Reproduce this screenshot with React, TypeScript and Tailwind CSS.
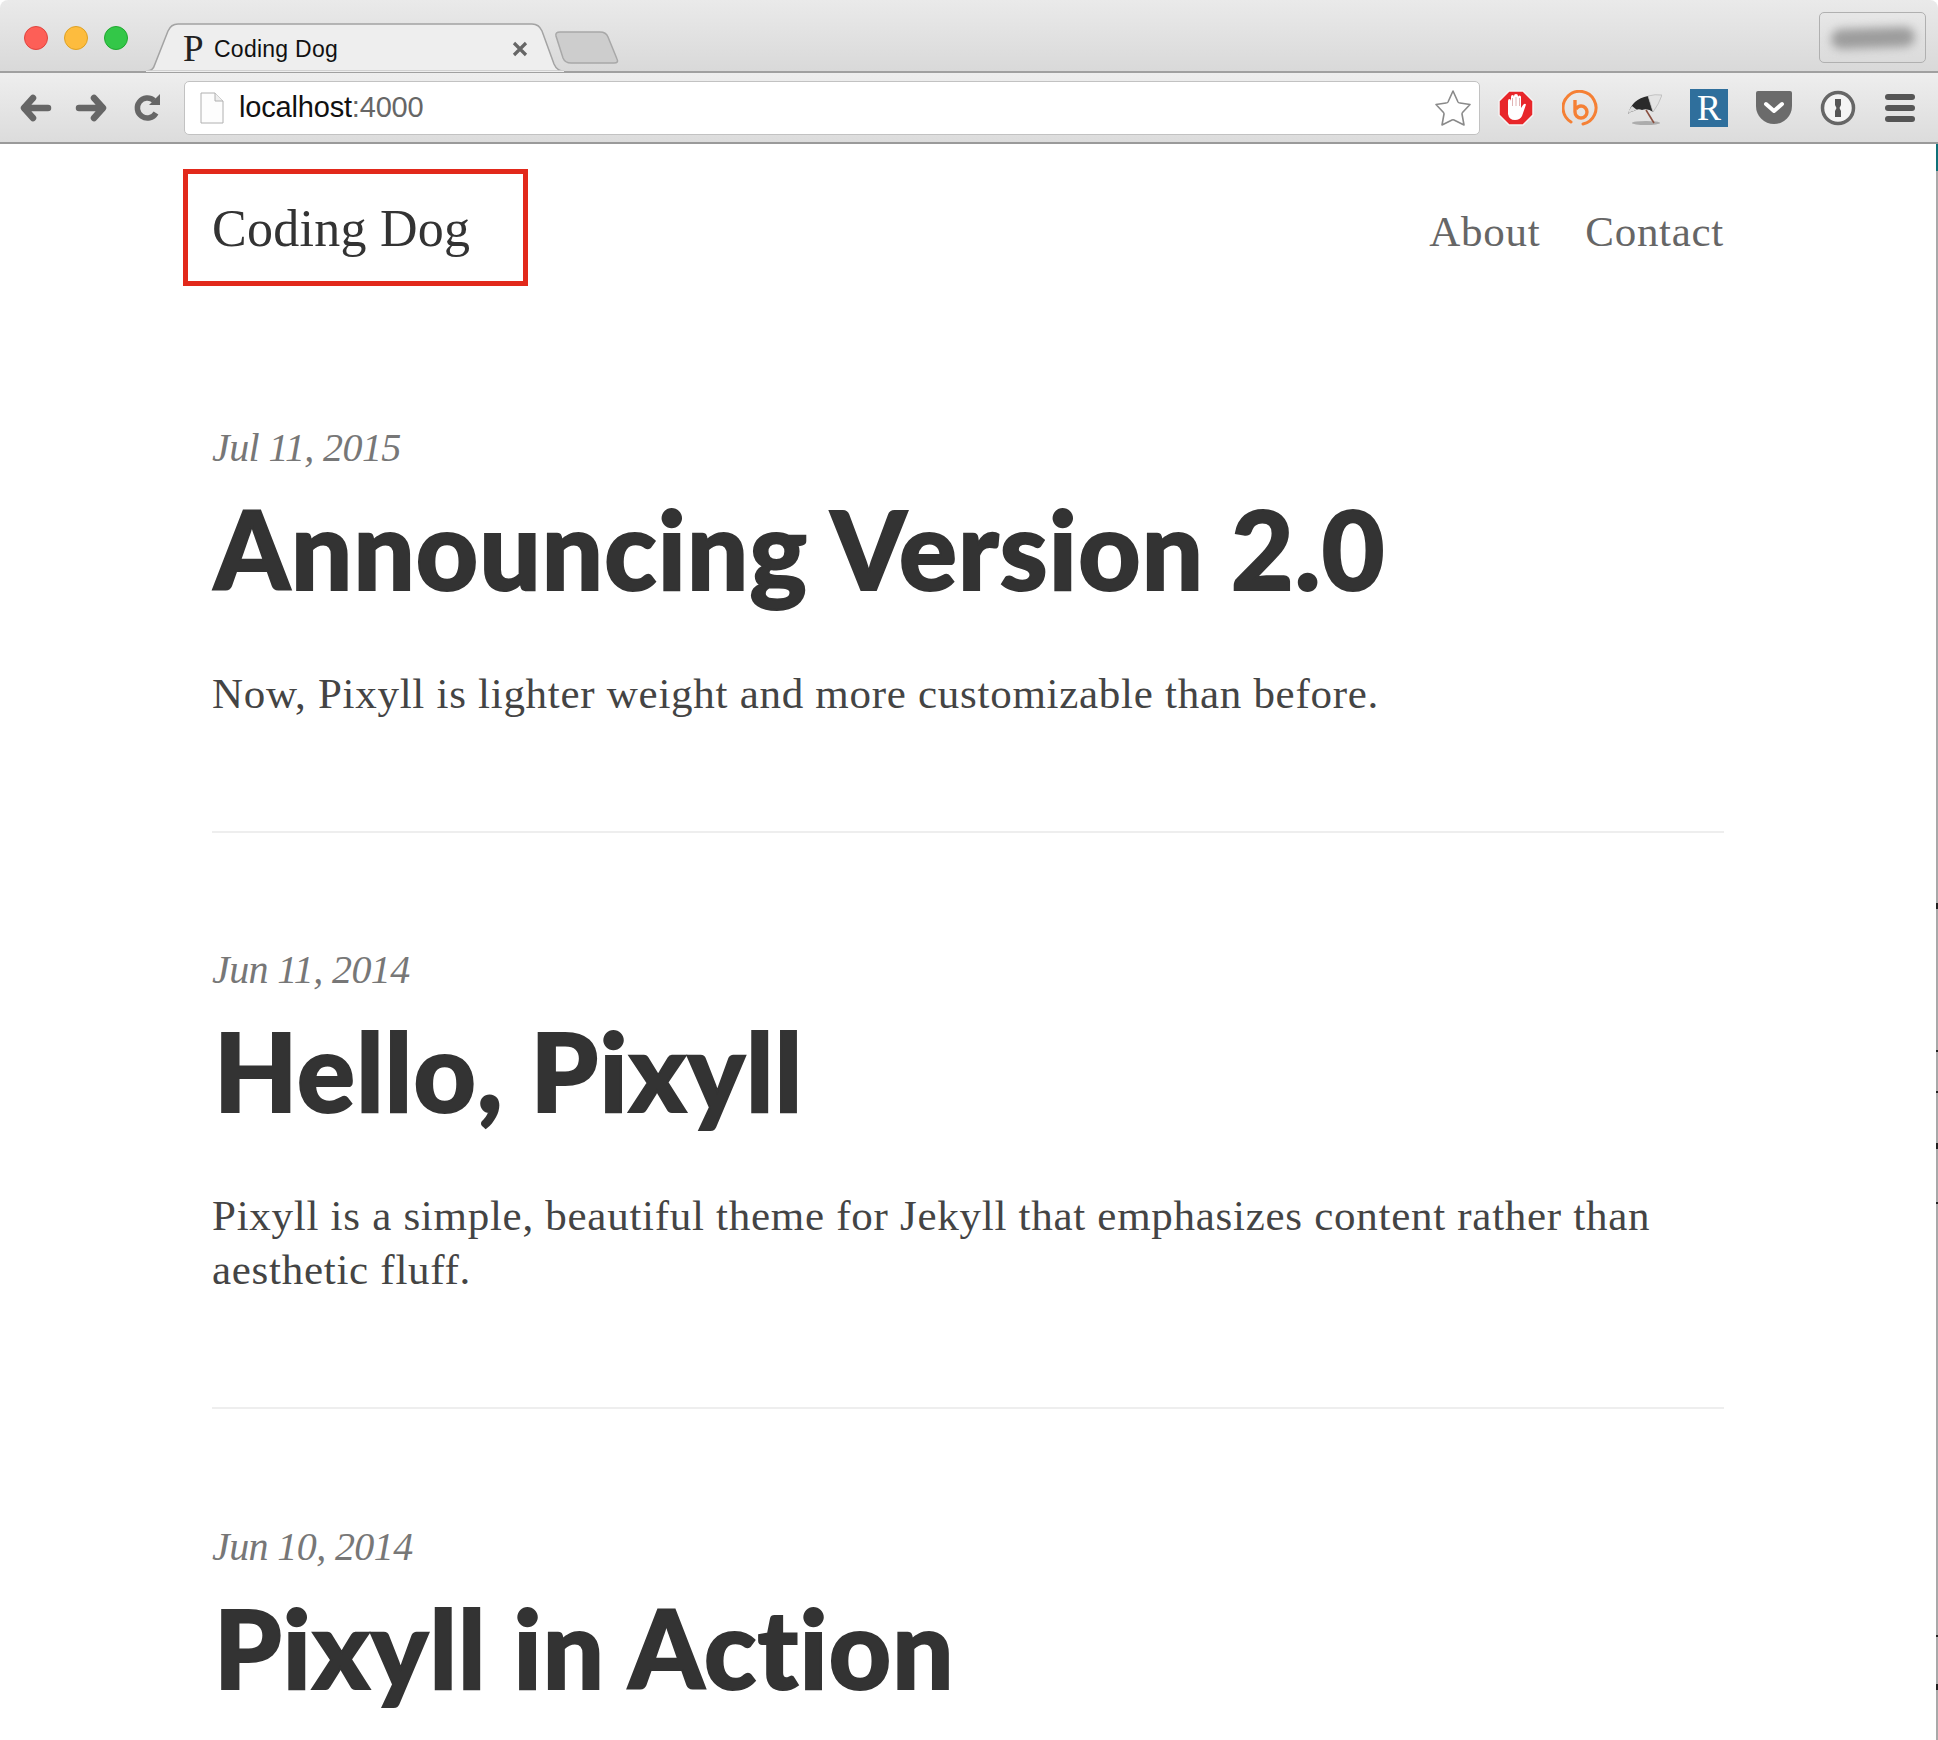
import React from "react";

const serif = "font-['Liberation_Serif',serif]";

function Back({ flip = false }: { flip?: boolean }) {
  return (
    <svg width="32" height="28" viewBox="0 0 32 28" style={flip ? { transform: "scaleX(-1)" } : undefined}>
      <path d="M13 4 L4 14 L13 24 M5 14 H28" fill="none" stroke="#666" strokeWidth="6.5" strokeLinecap="round" strokeLinejoin="round" />
    </svg>
  );
}

function Post({ date, title, children, rule = true }: { date: string; title: string; children?: React.ReactNode; rule?: boolean }) {
  return (
    <article className={rule ? "border-b-2 border-[#eeeeee]" : ""}>
      <div className={`${serif} italic text-[40px] leading-[48px] text-[#777] tracking-[-0.6px]`}>{date}</div>
      <h2 className="font-['Lato_Black','Lato',sans-serif] font-black text-[108px] leading-[120px] text-[#333] mt-[16px] ml-[2px] tracking-[1.2px] [-webkit-text-stroke:2px_#333]">{title}</h2>
      {children}
    </article>
  );
}

function Excerpt({ children }: { children: React.ReactNode }) {
  return <p className={`${serif} text-[43px] leading-[54px] text-[#444] mt-[59px] tracking-[0.72px]`}>{children}</p>;
}

export default function App() {
  return (
    <div className="w-[1938px] h-[1740px] overflow-hidden bg-white flex flex-col font-['Liberation_Sans',sans-serif]">
      <div className="h-[73px] shrink-0 rounded-t-[8px] bg-gradient-to-b from-[#eaeaea] to-[#d9d9d9] border-b-2 border-[#a0a0a0] flex items-start relative">
        <div className="flex gap-[16px] pl-[24px] pt-[26px] w-[146px] shrink-0">
          <span className="size-[24px] rounded-full bg-[#fd5f57] border border-[#e0443e]" />
          <span className="size-[24px] rounded-full bg-[#fdbc3e] border border-[#dea123]" />
          <span className="size-[24px] rounded-full bg-[#33c748] border border-[#1fa82f]" />
        </div>
        <div className="relative w-[418px] h-[72px] shrink-0 flex items-center">
          <svg className="absolute inset-0" width="418" height="72" viewBox="0 0 418 72">
            <path d="M0 71 H1 Q7 71 9 64 L22 31 Q25 24 32 24 H386 Q393 24 396 31 L408 64 Q411 71 418 71 Z" fill="#eeeeee" stroke="#a3a3a3" strokeWidth="1.5" />
            <path d="M-1 71.4 H419" stroke="#eeeeee" strokeWidth="2" />
          </svg>
          <div className="relative flex items-center w-full pt-[26px] pl-[37px]">
            <span className={`${serif} text-[37px] leading-[30px] text-[#222] w-[31px]`}>P</span>
            <span className="text-[23px] leading-[30px] text-[#111] tracking-[0.25px]">Coding Dog</span>
            <svg className="ml-auto mr-[36px]" width="16" height="16" viewBox="0 0 16 16">
              <path d="M2 2 L14 14 M14 2 L2 14" stroke="#666" strokeWidth="3.2" />
            </svg>
          </div>
        </div>
        <svg className="mt-[31px] -ml-[11px] shrink-0" width="68" height="34" viewBox="0 0 68 34">
          <path d="M3 5 Q2 1 7 1 H47 Q53 1 55 6 L64 28 Q66 32 61 32 H18 Q12 32 10 27 Z" fill="#cdcdcd" stroke="#a8a8a8" strokeWidth="1.5" />
        </svg>
        <div className="ml-auto mr-[12px] mt-[12px] w-[107px] h-[51px] rounded-[5px] border border-[#b0b0b0] flex items-center justify-center">
          <div className="w-[84px] h-[20px] rounded-full bg-[#9d9d9d] blur-[5px] -rotate-[2deg]" />
        </div>
      </div>

      <div className="h-[71px] shrink-0 bg-gradient-to-b from-[#eeeeee] to-[#dcdcdc] border-b-2 border-[#9a9a9a] flex items-center">
        <div className="flex items-center pl-[20px] w-[184px] shrink-0">
          <Back />
          <span className="w-[23px]" />
          <Back flip />
          <svg className="ml-[26px]" width="30" height="30" viewBox="0 0 30 30">
            <path d="M23 20 A10 10 0 1 1 21 7.500" fill="none" stroke="#666" strokeWidth="5.500" />
            <path d="M16 12 L27 12 L27 1 Z" fill="#666" />
          </svg>
        </div>
        <div className="w-[1296px] h-[54px] rounded-[5px] bg-white border border-[#c2c2c2] flex items-center shrink-0">
          <svg className="ml-[15px]" width="24" height="32" viewBox="0 0 24 32">
            <path d="M1 1 H15 L23 9 V31 H1 Z" fill="#fdfdfd" stroke="#b0b0b0" />
            <path d="M15 1 V9 H23" fill="#eeeeee" stroke="#b0b0b0" />
          </svg>
          <span className="ml-[15px] text-[29px] leading-none text-[#111] tracking-[-0.18px]">localhost<span className="text-[#666]">:4000</span></span>
          <svg className="ml-auto mr-[7px]" width="38" height="38" viewBox="0 0 38 38">
            <path d="M19 2 L24 13 Q24.500 14 26 14 L36 15.500 L28.500 23.500 Q28 24 28 25 L30 36 L20 31 Q19 30.500 18 31 L8 36 L10 25 Q10 24 9.500 23.500 L2 15.500 L12 14 Q13.500 14 14 13 Z" fill="#fff" stroke="#8a8a8a" strokeWidth="1.6" strokeLinejoin="round" />
          </svg>
        </div>
        <div className="flex items-center pl-[18px] gap-[27px]">
          <svg width="36" height="36" viewBox="0 0 36 36">
            <path d="M11 1 H25 L35 11 V25 L25 35 H11 L1 25 V11 Z" fill="#e8262a" stroke="#f4f4f4" strokeWidth="1.5" />
            <path d="M10 17 V11 Q10 9 11.500 9 Q13 9 13 11 V7 Q13 5 14.500 5 Q16 5 16 7 V6 Q16 4 18 4 Q20 4 20 6 V7 Q20 5.500 21.500 5.500 Q23 5.500 23 7 V18 L25 15 Q27 13 28 14.500 L24 26 Q22 30 17 30 Q11 30 10 24 Z" fill="#fff" />
            <path d="M14.500 8 V16 M18 7 V16 M21.500 8 V16" stroke="#d8a0a0" strokeWidth="0.8" />
          </svg>
          <svg className="ml-[1px]" width="36" height="36" viewBox="0 0 36 36">
            <path d="M9 32 A16.500 16.500 0 1 1 21 34" fill="none" stroke="#f58035" strokeWidth="3" strokeLinecap="round" />
            <path d="M13 10 V22 A6 6 0 1 0 19 16 Q16 16 14 19" fill="none" stroke="#f58035" strokeWidth="3.4" />
          </svg>
          <svg className="ml-[1px]" width="36" height="36" viewBox="0 0 36 36">
            <ellipse cx="20" cy="33" rx="14" ry="2" fill="#888" opacity="0.6" />
            <path d="M2 24 Q6 9 22 6 L27 22 Q22 18 16 20 Q12 18 8 21 Q5 21 2 24 Z" fill="#2a2a2a" />
            <path d="M2 24 Q3 19 6 16 L11 20 Q9 20 8 21 Q5 21 2 24 Z" fill="#dcdcdc" />
            <path d="M22 6 Q29 4 36 5 Q33 14 27 22 Z" fill="#e4e4e4" stroke="#aaa" strokeWidth="0.6" />
            <path d="M20 20 L28 33" stroke="#8a5040" strokeWidth="1.6" />
          </svg>
          <div className={`size-[38px] ml-[1px] bg-[#2f6f9c] text-white flex items-center justify-center ${serif} text-[36px] leading-none`}>R</div>
          <svg width="38" height="36" viewBox="0 0 38 36">
            <path d="M3 1 H35 Q37 1 37 3 V16 A18 18 0 0 1 1 16 V3 Q1 1 3 1 Z" fill="#6b6b6b" />
            <path d="M11 14 L19 21 L27 14" fill="none" stroke="#fff" strokeWidth="4" strokeLinecap="round" strokeLinejoin="round" />
          </svg>
          <svg width="36" height="36" viewBox="0 0 36 36">
            <circle cx="18" cy="18" r="15.500" fill="#f4f4f4" stroke="#666" strokeWidth="3.5" />
            <path d="M15 9 H21 V15 L19.500 18 L21 21 V27 H15 V21 L16.500 18 L15 15 Z" fill="#555" />
          </svg>
          <div className="flex flex-col gap-[5px] w-[30px] ml-[2px]">
            <span className="h-[6px] rounded-full bg-[#555]" />
            <span className="h-[6px] rounded-full bg-[#555]" />
            <span className="h-[6px] rounded-full bg-[#555]" />
          </div>
        </div>
      </div>

      <div className="flex-1 flex min-h-0">
        <main className="flex-1 pl-[212px] pr-[212px] overflow-hidden">
          <header className="flex items-center justify-between -ml-[29px] mt-[25px]">
            <div className="w-[345px] h-[117px] border-[5px] border-[#e2291b] flex items-center pl-[24px]">
              <span className={`${serif} text-[52px] leading-none text-[#333] tracking-[0.25px] pt-[2px]`}>Coding Dog</span>
            </div>
            <nav className={`${serif} flex gap-[45px] text-[43px] leading-none text-[#666] tracking-[0.7px] pt-[8px]`}>
              <span>About</span>
              <span>Contact</span>
            </nav>
          </header>
          <div className="mt-[138px]">
            <Post date="Jul 11, 2015" title="Announcing Version 2.0">
              <Excerpt>Now, Pixyll is lighter weight and more customizable than before.</Excerpt>
              <div className="h-[110px]" />
            </Post>
          </div>
          <div className="mt-[113px]">
            <Post date="Jun 11, 2014" title="Hello, Pixyll">
              <Excerpt>Pixyll is a simple, beautiful theme for Jekyll that emphasizes content rather than aesthetic fluff.</Excerpt>
              <div className="h-[110px]" />
            </Post>
          </div>
          <div className="mt-[114px]">
            <Post date="Jun 10, 2014" title="Pixyll in Action" rule={false} />
          </div>
        </main>
        <svg className="shrink-0" width="2" height="1596" viewBox="0 0 2 1596">
          <rect width="2" height="1596" fill="#a9a9a9" />
          <rect width="2" height="27" fill="#0f7078" />
          <rect y="759" width="2" height="6" fill="#222" />
          <rect y="906" width="2" height="2" fill="#222" />
          <rect y="947" width="2" height="2" fill="#222" />
          <rect y="999" width="2" height="6" fill="#222" />
          <rect y="1058" width="2" height="2" fill="#222" />
          <rect y="1491" width="2" height="2" fill="#222" />
          <rect y="1540" width="2" height="6" fill="#222" />
        </svg>
      </div>
    </div>
  );
}
